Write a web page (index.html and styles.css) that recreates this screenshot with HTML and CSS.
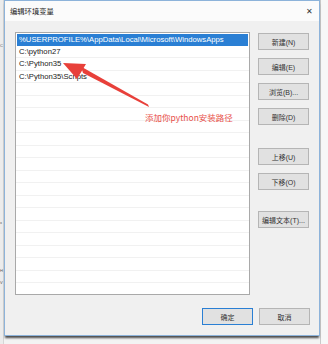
FILE: index.html
```html
<!DOCTYPE html>
<html lang="zh-CN">
<head>
  <meta charset="UTF-8">
  <title>编辑环境变量</title>
  <link rel="stylesheet" href="styles.css">
</head>
<body>
  <div class="desktop">
    <div class="behind-left">
      <span class="frag frag-c">C</span>
      <span class="frag frag-x">x</span>
      <span class="frag frag-h">H</span>
      <span class="frag frag-w">V</span>
    </div>

    <div class="dialog">
      <div class="titlebar">
        <span class="title">编辑环境变量</span>
        <span class="close">&#x2715;</span>
      </div>

      <div class="content">
        <div class="list">
          <div class="row selected">%USERPROFILE%\AppData\Local\Microsoft\WindowsApps</div>
          <div class="row">C:\python27</div>
          <div class="row">C:\Python35</div>
          <div class="row">C:\Python35\Scripts</div>
          <div class="row"></div>
          <div class="row"></div>
          <div class="row"></div>
          <div class="row"></div>
          <div class="row"></div>
          <div class="row"></div>
          <div class="row"></div>
          <div class="row"></div>
          <div class="row"></div>
          <div class="row"></div>
          <div class="row"></div>
          <div class="row"></div>
          <div class="row"></div>
          <div class="row"></div>
          <div class="row"></div>
          <div class="row"></div>
          <div class="row last"></div>
        </div>

        <div class="side-buttons">
          <button class="btn">新建(N)</button>
          <button class="btn">编辑(E)</button>
          <button class="btn">浏览(B)...</button>
          <button class="btn">删除(D)</button>
          <button class="btn gap-top">上移(U)</button>
          <button class="btn">下移(O)</button>
          <button class="btn gap-top2">编辑文本(T)...</button>
        </div>
      </div>

      <div class="footer">
        <button class="btn default">确定</button>
        <button class="btn">取消</button>
      </div>

      <!-- annotation drawn over the screenshot -->
      <svg class="arrow" width="328" height="344" viewBox="0 0 328 344">
        <polygon points="145,104.5 146,107 80,73 78,66.5" fill="#e8403a"/>
        <polygon points="60,63 83,64 74,79" fill="#e8403a"/>
      </svg>
      <span class="note">添加你python安装路径</span>
    </div>

    <div class="behind-right"></div>
  </div>
</body>
</html>
```

FILE: styles.css
```css
html, body {
  margin: 0;
  padding: 0;
}

body {
  width: 328px;
  height: 344px;
  overflow: hidden;
  background-color: #f3f3f3;
  font-family: 'Liberation Sans', 'Noto Sans CJK SC', sans-serif;
}

.desktop {
  display: flex;
  height: 344px;
}

.behind-left {
  width: 4px;
  flex: none;
  background-color: #ececec;
  border-right: 1px solid #d6d6d6;
  box-sizing: border-box;
  position: relative;
}

.frag {
  position: absolute;
  left: 0;
  font-size: 4px;
  color: #555;
}

.frag-c { top: 43px; }
.frag-x { top: 220px; }
.frag-h { top: 268px; }
.frag-w { top: 280px; }

.dialog {
  width: 316px;
  height: 336px;
  flex: none;
  box-sizing: border-box;
  background-color: #f0f0f0;
  border: 1px solid #8db3da;
  box-shadow: 0 3px 2px -1px #4a4a4a;
  display: flex;
  flex-direction: column;
  position: relative;
}

.behind-right {
  flex: 1;
  background-color: #f7f7f7;
  border-left: 1px solid #c9c9c9;
}

.titlebar {
  height: 20px;
  background-color: #fbfbfb;
  display: flex;
  align-items: center;
  justify-content: space-between;
  padding: 0 6px 0 5px;
}

.title {
  font-size: 7.3px;
  color: #222;
}

.close {
  font-size: 8px;
  color: #333;
}

.content {
  display: flex;
  padding: 11px 0 0 10px;
}

.list {
  width: 235px;
  height: 263px;
  box-sizing: border-box;
  background-color: white;
  border: 1px solid #a9a9a9;
  overflow: hidden;
}

.row {
  height: 12.5px;
  box-sizing: border-box;
  border-bottom: 1px solid #f1f1f1;
  font-size: 7.7px;
  line-height: 11.5px;
  padding-left: 3px;
  color: #222;
  white-space: nowrap;
}

.row.selected {
  background-color: #2a7fd4;
  color: white;
  margin: 1px 1px 0;
  height: 11.5px;
  line-height: 11px;
  padding-left: 2px;
  border-bottom: none;
}

.side-buttons {
  display: flex;
  flex-direction: column;
  gap: 8px;
  margin-left: 8px;
  padding-top: 1px;
}

.btn {
  width: 51px;
  height: 17px;
  box-sizing: border-box;
  background-color: #e1e1e1;
  border: 1px solid #b5b5b5;
  font-family: 'Liberation Sans', 'Noto Sans CJK SC', sans-serif;
  font-size: 7px;
  color: #333;
  padding: 0;
  margin: 0;
}

.gap-top {
  margin-top: 15px;
}

.gap-top2 {
  margin-top: 13px;
}

.footer {
  display: flex;
  justify-content: flex-end;
  gap: 6px;
  padding: 13px 9px 0 0;
}

.btn.default {
  border-color: #2a7fd4;
}

.arrow {
  position: absolute;
  left: -2px;
  top: -1px;
  pointer-events: none;
}

.note {
  position: absolute;
  left: 140px;
  top: 110px;
  font-size: 8.5px;
  color: #e8504a;
  white-space: nowrap;
  font-family: 'Noto Sans CJK SC', sans-serif;
}
```
